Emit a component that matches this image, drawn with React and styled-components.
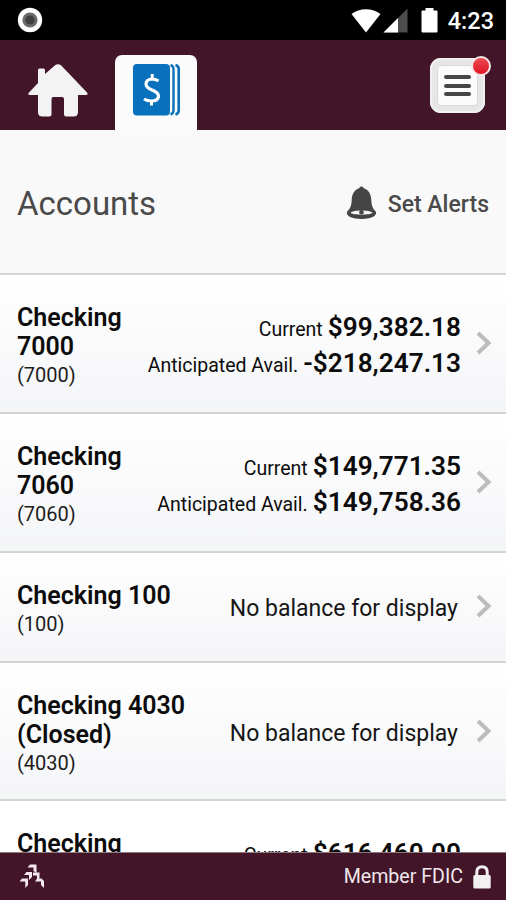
import React from 'react';
import styled, { createGlobalStyle } from 'styled-components';

const GlobalStyle = createGlobalStyle`
    * {
        box-sizing: border-box;
    }
    body {
        margin: 0;
        background-color: #f9f9f9;
        font-family: Roboto, "Liberation Sans", sans-serif;
    }
`;

const accounts = [
    { name: 'Checking 7000', number: '7000', current: '$99,382.18', available: '-$218,247.13' },
    { name: 'Checking 7060', number: '7060', current: '$149,771.35', available: '$149,758.36' },
    { name: 'Checking 100', number: '100' },
    { name: 'Checking 4030 (Closed)', number: '4030' },
    { name: 'Checking', current: '$616,460.00' },
];

const RecordIcon = () => (
    <svg width="26" height="26" viewBox="0 0 26 26">
        <circle cx="13" cy="13" r="12.2" fill="#fff" />
        <circle cx="13" cy="13" r="7.6" fill="#6a6a6a" />
        <circle cx="13" cy="13" r="4.6" fill="#404040" />
    </svg>
);

const StatusIcons = () => (
    <svg width="88" height="26" viewBox="0 0 88 26">
        <path d="M.5 7C8.500.5 21.500.5 29.500 7L15 25.500Z" fill="#fff" />
        <path d="M56.500 1.500V25.500H32.500Z" fill="#4d4d4d" />
        <path d="M47 11V25.500H32.500Z" fill="#fff" />
        <path d="M74.500 1H82.500V3.500H85.500Q86.500 3.500 86.500 4.500V24.500Q86.500 25.500 85.500 25.500H71.500Q70.500 25.500 70.500 24.500V4.500Q70.500 3.500 71.500 3.500H74.500Z" fill="#fff" />
    </svg>
);

const HomeIcon = () => (
    <svg width="60" height="54" viewBox="0 0 60 54">
        <path
            d="M10 6Q10 4.500 11.500 4.500H15.500Q17 4.500 17 6V10L27 1.200Q30 -.8 33 1.200L59 28.500Q60.500 31 58 31H50V48Q50 52.500 45.500 52.500H38Q36 52.500 36 50.500V35Q36 33 34 33H25.500Q23.500 33 23.500 35V50.500Q23.500 52.500 21.500 52.500H14.500Q10 52.500 10 48V31H2Q-.8 31 1 28.500L10 19Z"
            fill="#f4f3f4"
        />
    </svg>
);

const AccountsIcon = () => (
    <svg width="48" height="52" viewBox="0 0 48 52">
        <rect x="0" y="0" width="37" height="51.500" rx="4" fill="#0871bd" />
        <path d="M37.500 1Q40.500 2 40.500 5V46.500Q40.500 49.500 37.500 50.500" fill="none" stroke="#0871bd" strokeWidth="2.400" />
        <path d="M42.500 1Q45.700 2 45.700 5V46.500Q45.700 49.500 42.500 50.500" fill="none" stroke="#0871bd" strokeWidth="2.600" />
        <path d="M25.500 17Q22.500 15 19 15Q13 15.500 13 20Q13 23.500 18.500 25.700Q26 28.500 25.500 32.500Q25 37 18.500 37Q14 37 11 35" fill="none" stroke="#fff" strokeWidth="3.200" />
        <path d="M19.200 10V15M18.500 37V41.500" fill="none" stroke="#fff" strokeWidth="3" />
    </svg>
);

const BellIcon = () => (
    <svg width="31" height="34" viewBox="0 0 31 34">
        <path
            d="M15.500.5C17 .5 17.500 1.500 17.800 2.300C23 4 25 8.500 25.300 14C25.500 20 27 23 30 25.700C31 29 27 33 15.500 33S0 29 1 25.700C4 23 5.500 20 5.700 14C6 8.500 8 4 13.200 2.300C13.500 1.500 14 .5 15.500.5Z"
            fill="#454545"
        />
        <path d="M4.500 26.800C7 23.800 24 23.800 26.500 26.800C24 29.300 7 29.300 4.500 26.800Z" fill="#f8f8f8" />
        <circle cx="15.500" cy="26.300" r="2.300" fill="#454545" />
    </svg>
);

const ArrowIcon = () => (
    <svg width="16" height="24" viewBox="0 0 16 24">
        <path d="M2 2L12.500 12L2 22" fill="none" stroke="#bcbcbc" strokeWidth="4" />
    </svg>
);

const BrandIcon = () => (
    <svg width="27" height="25" viewBox="0 0 27 25">
        <g fill="#f7e8ef">
            <path d="M8.500 3.500L11 .5H17.500V9L14.500 7V3.500H8.500Z" />
            <path d="M5 11L7.500 8H13V13L10 16V11H5Z" />
            <path d="M14 8.500H20.500V14L18 16.500V11.500H14Z" />
            <path d="M.5 17.500L3 14.500H9V21L6.300 24V17.500H.5Z" />
            <path d="M16 17.500L18 14.500H22.500L25 17V24L22 21V17.500H16Z" />
        </g>
    </svg>
);

const LockIcon = () => (
    <svg width="18" height="24" viewBox="0 0 18 24">
        <path d="M3.800 11V7Q3.800 1.700 9 1.700T14.200 7V11" fill="none" stroke="#f3f0f1" strokeWidth="3" />
        <rect x=".3" y="10" width="17.400" height="13.500" rx="1.500" fill="#f3f0f1" />
    </svg>
);

const AccountEntry = ({ account }) => (
    <Entry>
        <AccountInfo>
            <AccountName>{account.name}</AccountName>
            {account.number && <AccountNumber>({account.number})</AccountNumber>}
        </AccountInfo>
        {account.current ? (
            <Balances>
                <Balance><Label>Current</Label>{account.current}</Balance>
                {account.available && (
                    <Balance><Label>Anticipated Avail.</Label>{account.available}</Balance>
                )}
            </Balances>
        ) : (
            <NoBalance>No balance for display</NoBalance>
        )}
        <Arrow><ArrowIcon /></Arrow>
    </Entry>
);

const App = () => {
    return (
        <Screen>
            <GlobalStyle />
            <StatusBar>
                <RecordIcon />
                <StatusGroup>
                    <StatusIcons />
                    <Clock>4:23</Clock>
                </StatusGroup>
            </StatusBar>
            <NavBar>
                <HomeLink><HomeIcon /></HomeLink>
                <ActiveTab><AccountsIcon /></ActiveTab>
                <MenuButton aria-label="Menu">
                    <MenuFace>
                        <MenuLine />
                        <MenuLine />
                        <MenuLine />
                    </MenuFace>
                    <Badge />
                </MenuButton>
            </NavBar>
            <TitleBar>
                <Title>Accounts</Title>
                <AlertsLink>
                    <BellIcon />
                    <AlertsText>Set Alerts</AlertsText>
                </AlertsLink>
            </TitleBar>
            <AccountList>
                {accounts.map((account, i) => (
                    <AccountEntry key={i} account={account} />
                ))}
            </AccountList>
            <Footer>
                <BrandIcon />
                <Member>
                    <MemberText>Member FDIC</MemberText>
                    <LockIcon />
                </Member>
            </Footer>
        </Screen>
    );
};

const Screen = styled.div`
    display: flex;
    flex-direction: column;
    width: 506px;
    height: 900px;
    overflow: hidden;
`;

const StatusBar = styled.div`
    display: flex;
    flex: none;
    justify-content: space-between;
    align-items: center;
    height: 40px;
    padding: 0 12px 0 17px;
    background-color: #000;
`;

const StatusGroup = styled.div`
    display: flex;
    align-items: center;
    gap: 9px;
`;

const Clock = styled.div`
    padding-top: 2px;
    font-size: 23.500px;
    font-weight: 500;
    line-height: 26px;
    color: #fff;
`;

const NavBar = styled.div`
    display: flex;
    flex: none;
    height: 90px;
    padding-left: 28px;
    padding-right: 21px;
    background-color: #421528;
`;

const HomeLink = styled.div`
    width: 87px;
    padding-top: 24px;
`;

const ActiveTab = styled.div`
    width: 82px;
    margin-top: 15px;
    padding: 9px 0 0 18px;
    border-radius: 7px 7px 0 0;
    background-color: #fbfbfb;
`;

const MenuButton = styled.button`
    position: relative;
    width: 55px;
    height: 55px;
    margin: 18px 0 0 auto;
    padding: 7px;
    border: none;
    border-radius: 11px;
    background-color: #e6e6e7;
    box-shadow: inset 0 0 0 2px #f0f0f0;
`;

const MenuFace = styled.div`
    display: flex;
    flex-direction: column;
    justify-content: center;
    align-items: center;
    gap: 4.500px;
    height: 41px;
    border: 1px solid #dadada;
    border-radius: 4px;
    background-color: #fbfbfb;
`;

const MenuLine = styled.div`
    width: 27px;
    height: 4px;
    border-radius: 2px;
    background-color: #464646;
`;

const Badge = styled.div`
    position: absolute;
    top: -2px;
    right: -6px;
    width: 20px;
    height: 20px;
    border: 2px solid #f6e6e8;
    border-radius: 50%;
    background: linear-gradient(#ec4b55, #e01423);
`;

const TitleBar = styled.div`
    display: flex;
    flex: none;
    justify-content: space-between;
    align-items: center;
    height: 143px;
    padding: 4px 17px 0 17px;
    background-color: #f9f9f9;
`;

const Title = styled.div`
    font-size: 33px;
    color: #4a4a4a;
`;

const AlertsLink = styled.div`
    display: flex;
    align-items: center;
    gap: 11px;
    padding-bottom: 2px;
`;

const AlertsText = styled.div`
    padding-top: 3px;
    font-size: 23px;
    font-weight: 500;
    color: #4a4a4a;
`;

const AccountList = styled.div`
    flex: 1;
    min-height: 0;
    overflow: hidden;
`;

const Entry = styled.div`
    display: flex;
    align-items: center;
    padding: 28px 14px 21.500px 17px;
    border-top: 2px solid #d3d5d5;
    background: linear-gradient(#fff, #f4f5f7);

    /* only the top of the last entry shows above the footer */
    &:last-child {
        align-items: flex-start;
        padding-top: 28px;
        background: #fff;
    }
`;

const AccountInfo = styled.div`
    flex: 1;
    width: 0;
`;

const AccountName = styled.div`
    max-width: 170px;
    font-size: 25px;
    font-weight: 600;
    line-height: 29.200px;
    color: #0c0c0c;
`;

const AccountNumber = styled.div`
    font-size: 20px;
    line-height: 29px;
    color: #1c1c1c;
`;

const Balances = styled.div`
    margin-right: 15px;
    padding-top: 7px;
    padding-bottom: 9px;
`;

const Balance = styled.div`
    display: flex;
    justify-content: flex-end;
    align-items: baseline;
    gap: 5px;
    height: 35.500px;
    font-size: 26.200px;
    font-weight: 600;
    line-height: 35px;
    white-space: nowrap;
    color: #0c0c0c;
`;

const Label = styled.span`
    font-size: 19.500px;
    font-weight: 400;
    line-height: 24px;
`;

const NoBalance = styled.div`
    margin-right: 18px;
    padding-bottom: 2px;
    font-size: 23px;
    color: #161616;
`;

const Arrow = styled.div`
    display: flex;
    padding-bottom: 7px;

    ${Entry}:last-child & {
        padding-top: 26px;
    }
`;

const Footer = styled.div`
    display: flex;
    flex: none;
    justify-content: space-between;
    align-items: center;
    height: 48px;
    padding: 0 15px 0 19px;
    border-top: 1px solid #8d7880;
    background-color: #421528;
`;

const Member = styled.div`
    display: flex;
    align-items: center;
    gap: 10px;
`;

const MemberText = styled.div`
    font-size: 19.600px;
    color: #f0e8ec;
`;

export default App;
